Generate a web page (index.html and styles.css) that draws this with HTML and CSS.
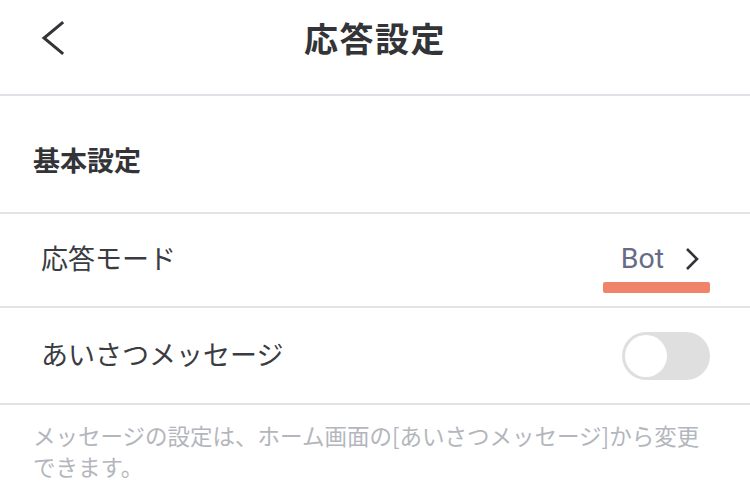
FILE: index.html
```html
<!DOCTYPE html>
<html lang="ja">
<head>
<meta charset="utf-8">
<title>応答設定</title>
<link rel="stylesheet" href="styles.css">
</head>
<body>
<header class="header">
  <div class="header-left">
    <svg class="back" width="26" height="36" viewBox="0 0 26 36" aria-hidden="true">
      <polyline points="22,3 4,18 22,33" fill="none" stroke="#333438" stroke-width="3" stroke-linecap="square" stroke-linejoin="miter"/>
    </svg>
  </div>
  <h1 class="title">応答設定</h1>
  <div class="header-right"></div>
</header>

<section class="section-head">
  <h2 class="section-title">基本設定</h2>
</section>

<div class="row row-mode">
  <span class="label">応答モード</span>
  <span class="value">
    <span class="value-text">Bot</span>
    <svg class="chev" width="16" height="24" viewBox="0 0 16 24" aria-hidden="true">
      <polyline points="3,2 13,12 3,22" fill="none" stroke="#333438" stroke-width="2.6"/>
    </svg>
    <span class="mark"></span>
  </span>
</div>

<div class="row row-greet">
  <span class="label">あいさつメッセージ</span>
  <span class="toggle"><span class="knob"></span></span>
</div>

<p class="note">メッセージの設定は、ホーム画面の[あいさつメッセージ]から変更できます。</p>
</body>
</html>
```

FILE: styles.css
```css
* { box-sizing: border-box; }
html, body { margin: 0; padding: 0; background: #fff; }
body {
  width: 750px;
  font-family: "Noto Sans CJK JP", "Noto Sans", sans-serif;
  color: #333438;
}

.header {
  height: 96px;
  padding-top: 21px;
  display: grid;
  grid-template-columns: 1fr auto 1fr;
  align-items: start;
  border-bottom: 2px solid #dee2e6;
}
.header-left {
  height: 34px;
  display: flex;
  align-items: center;
  padding-left: 40px;
}
.back { display: block; }
.title {
  margin: 0;
  font-size: 34px;
  line-height: 34px;
  font-weight: 700;
  color: #333438;
  letter-spacing: 1.5px;
}

.section-head {
  height: 118px;
  padding: 50px 0 0 33px;
  border-bottom: 2px solid #e3e3e3;
}
.section-title {
  margin: 0;
  font-size: 27px;
  line-height: 27px;
  font-weight: 700;
  color: #333438;
}

.row {
  display: flex;
  align-items: center;
  justify-content: space-between;
  border-bottom: 2px solid #e3e3e3;
}
.row-mode { height: 94px; padding: 0 50px 0 41px; }
.row-greet { height: 97px; padding: 0 40px 0 41px; }
.label {
  font-size: 27px;
  line-height: 30px;
  color: #3a3c42;
  margin-top: -4px;
}

.value {
  position: relative;
  display: flex;
  align-items: center;
  gap: 20px;
  margin-top: -2px;
}
.value-text {
  font-family: Roboto, "Liberation Sans", sans-serif;
  font-size: 28.5px;
  line-height: 30px;
  color: #676b86;
}
.chev { display: block; }
.mark {
  position: absolute;
  left: -18px;
  right: -10px;
  top: 38px;
  height: 11px;
  background: #ef846b;
  border-radius: 2px;
}

.toggle {
  width: 88px;
  height: 48px;
  border-radius: 24px;
  background: #dfdfdf;
  padding: 3px;
  display: flex;
  align-items: center;
}
.knob {
  width: 42px;
  height: 42px;
  border-radius: 50%;
  background: #fff;
}

.note {
  margin: 0;
  padding: 15px 45px 0 33px;
  font-size: 22.5px;
  line-height: 31px;
  color: #b3b6bd;
}
```
